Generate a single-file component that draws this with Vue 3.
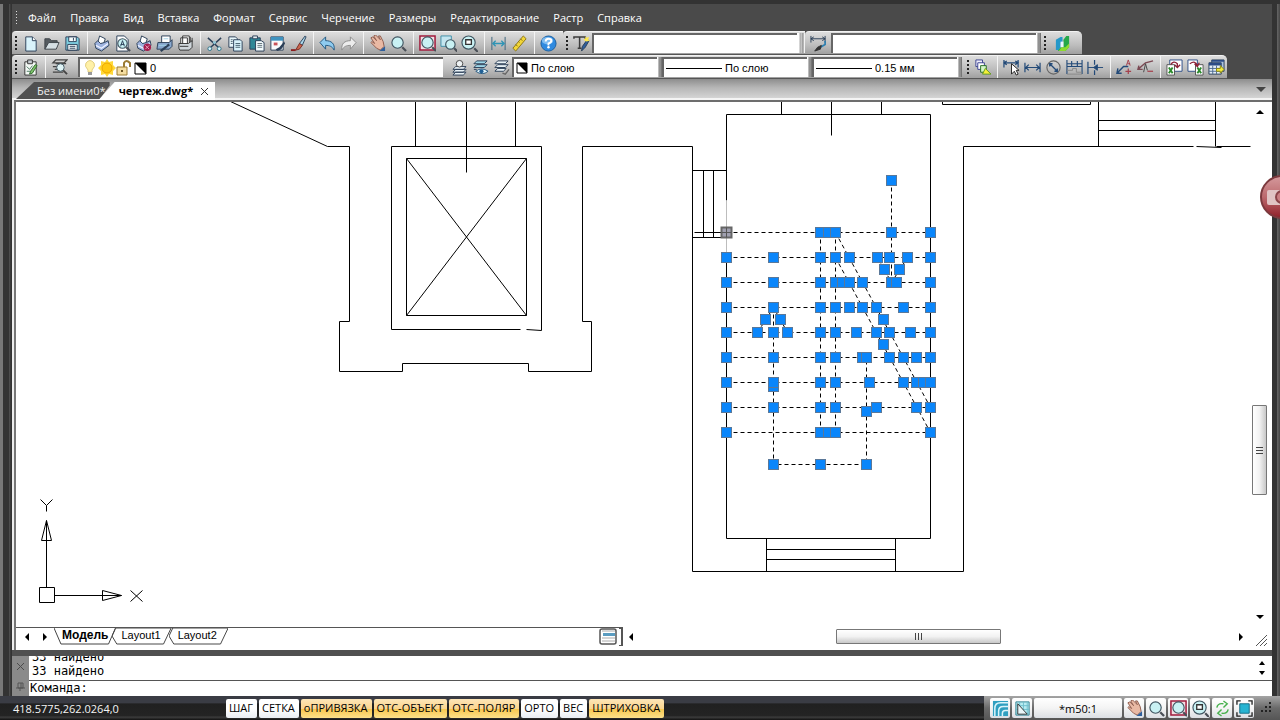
<script setup>
import { ref } from 'vue'

const ink = '#2b3f57'
const lens = (x, y, r) =>
  `<path d="M${x + r - 1} ${y + r - 1}l4 4" stroke="#4a4f57" stroke-width="2.4"/><circle cx="${x}" cy="${y}" r="${r}" fill="#c9f1f3" stroke="#3f5460" stroke-width="1.2"/>`
const hand = `<path d="M2 3l2-1 4 4-3-5 2-1 5 5-2-4 2 0 3 6 1 5-4 4-4-2-6-6 1-1 3 2z" fill="#e9b9a4" stroke="#8d5a4b"/><path d="M11 17l6-5v5z" fill="#2f5f9c"/>`
const printer = `<path d="M5 8L7 1l6 3-2 6z" fill="#fff" stroke="${ink}"/><path d="M2 9l3-3 3 3 4-1 4-2 1 5-8 6-6-3z" fill="#9fb4e0" stroke="${ink}"/><path d="M3 11l6 3 7-5" fill="none" stroke="#eef3ff" stroke-width="1.400"/>`
const layers = `<path d="M5 8h11l-3 3H2zM5 11h11l-3 3H2zM5 14h11l-3 3H2z" fill="#e9f2f6" stroke="${ink}"/>`

const icons = {
  new: `<path d="M4 2h7l4 4v11H4z" fill="#d9f3fb" stroke="${ink}"/><path d="M11 2v4h4" fill="#fff" stroke="${ink}"/>`,
  open: `<path d="M2 15V4h5l2 2h6v3" fill="#555b60" stroke="#3b4248"/><path d="M2 15l4-7h11l-3 7z" fill="#d5dfe4" stroke="#3b4248"/>`,
  save: `<path d="M2 2h12l2 2v12H2z" fill="#7fd0e2" stroke="${ink}"/><path d="M5 2h8v5H5zM4 10h10v6H4z" fill="#f4fbfc" stroke="${ink}"/><path d="M6 12h6M6 14h6M10 3v3" stroke="${ink}"/>`,
  print: printer,
  preview: `<path d="M3 1h8l4 4v12H3z" fill="#fff" stroke="${ink}"/>${lens(9, 9, 5)}<path d="M7 12l2-6 2 6M7 10h4" fill="none" stroke="${ink}"/>`,
  plotset: `${printer}<circle cx="13" cy="13" r="4" fill="#a51c4c"/><path d="M11 11l4 4M15 11l-4 4" stroke="#e8a0bb"/>`,
  publish: `<path d="M6 8V1h9v8" fill="#fff" stroke="${ink}"/><path d="M2 8h12l3-3v7l-3 3H1z" fill="#8aa9cf" stroke="${ink}"/><path d="M5 17l9-7" stroke="${ink}" stroke-width="2.400"/><path d="M3 11h8M8 4h5" stroke="#9fd0e6"/>`,
  batch: `<path d="M6 1h7v9H6zM4 3h7v9H4z" fill="#fff" stroke="#333"/><path d="M2 9h10l4-3v7l-3 3H3l-1-2z" fill="#cfd6db" stroke="#333"/><path d="M3 12h9M14 2v5M16 3v4" stroke="#333"/>`,
  cut: `<path d="M2 3l11 10M16 3L5 13" stroke="${ink}" stroke-width="1.6"/><path d="M7 8l2-2 2 2-2 2z" fill="#8fc7d8"/><circle cx="4" cy="14.500" r="2" fill="#d9f3fb" stroke="#2e7187"/><circle cx="14" cy="14.500" r="2" fill="#d9f3fb" stroke="#2e7187"/>`,
  copy: `<path d="M2 2h7l2 2v9H2z" fill="#e9f7fb" stroke="${ink}"/><path d="M7 5h7l2 2v10H7z" fill="#d9f3fb" stroke="${ink}"/><path d="M9 9h5M9 11h5M9 13h5M4 5h2M4 7h2M4 9h2" stroke="#47616f"/>`,
  paste: `<path d="M2 3h11v12H2z" fill="#2f8797" stroke="${ink}"/><path d="M5 1h5v3H5z" fill="#e5eef0" stroke="${ink}"/><path d="M8 6h6l3 2v9H8z" fill="#f3fbfd" stroke="${ink}"/><path d="M10 9h5M10 11h5M10 13h5" stroke="#5f6f78"/>`,
  match: `<path d="M2 2h13v14H2z" fill="#f8fbfc" stroke="${ink}"/><path d="M2 2h13v4H2z" fill="#3f93c0"/><path d="M5 8h4v3H5z" fill="#c9545a"/><path d="M16 7l-5 6-4 2 2 2 4-2 4-6z" fill="${ink}"/>`,
  brush: `<path d="M16 1l-6 8 3 2 4-9z" fill="#a9d6ea" stroke="${ink}"/><path d="M10 9l3 2-3 4-4 1z" fill="#c9664f" stroke="#7a2c22"/><path d="M1 16h5" stroke="#8b1c1c" stroke-width="2"/>`,
  undo: `<path d="M1 8l6-6v4c6 0 10 3 9 10-2-4-5-5-9-5v4z" fill="#8ecbf0" stroke="#23577f"/>`,
  redo: `<path d="M17 8l-6-6v4c-6 0-10 3-9 10 2-4 5-5 9-5v4z" fill="#ececec" stroke="#8c8c8c"/>`,
  hand,
  zoom: lens(8, 8, 6),
  extents: `<path d="M1 1h16v15H1z" fill="#f3dfe3" stroke="#a01b3d" stroke-width="1.600"/>${lens(9, 8, 6)}`,
  window: `<path d="M1 1h11v11H1z" fill="#c4e6f0" stroke="#3f8ea8"/>${lens(11, 10, 5)}`,
  previous: `${lens(8, 8, 7)}<path d="M5 5h6v5H5z" fill="#fff" stroke="#333" stroke-width="1.400"/>`,
  distance: `<path d="M2 2v14M16 2v14" stroke="#38627a"/><path d="M3 9h12M6 6L3 9l3 3M12 6l3 3-3 3" fill="none" stroke="#2f94b5" stroke-width="1.400"/>`,
  ruler: `<path d="M2 14L13 1l3 3L5 17z" fill="#f2d638" stroke="#8b7515"/><path d="M5 10l2 2M8 7l1 1M10 4l2 2" stroke="#7c6812"/>`,
  help: `<circle cx="9" cy="9" r="8" fill="#2f8ae0" stroke="#1c5f9e"/><ellipse cx="8" cy="6" rx="6" ry="4" fill="#7dbcf2"/><path d="M6 7q0-3 3-3t3 2q0 2-3 3v2" fill="none" stroke="#fff" stroke-width="2"/><circle cx="9" cy="13" r="1.300" fill="#fff"/>`,
  textstyle: `<path d="M1 4V2h12v2M7 2v12M5 14h4" fill="none" stroke="#3c3c3c" stroke-width="1.600"/><path d="M17 6l-4 7-4 4 1-5 5-7z" fill="#2f5f9c" stroke="${ink}"/><path d="M13 1l1 2 3-1-1 3 2 1-4 1-3-2 2-1z" fill="#ffe94a"/>`,
  dimstyle: `<path d="M1 1v7M16 1v7M1 4h15M4 2L1 4l3 2M13 2l3 2-3 2" fill="none" stroke="${ink}"/><path d="M16 6v4l-5 3" fill="none" stroke="#2d7fb0" stroke-width="1.800"/><path d="M12 11l-1 4-6 2 3-4z" fill="#333" stroke="#333"/>`,
  nano: `<path d="M2 16V5l5-3h2v6H7v5l-2 3z" fill="#2498c9"/><path d="M16 1v12l-4 4H4l3-4h3V5l3-4z" fill="#25a84a"/><path d="M7 7h3v6H7z" fill="#e9f7ff"/><path d="M16 9v4l-4 4H5l3-4h4z" fill="#8edb2f"/>`,
  layerprops: `<path d="M3 3h12v14H3z" fill="#f3f8f4" stroke="#333"/><path d="M6 1h5v4H6z" fill="#c5cbd0" stroke="#333"/><path d="M5 8l3 3 3-4M5 13h4" fill="none" stroke="#4c7a63"/><path d="M16 7l-5 8-3 1 1-3 5-7z" fill="#7ec26a" stroke="#2f6a2a"/>`,
  layerfind: `<path d="M5 1h12l-3 3H2zM5 5h11M2 8h5M4 11h3M2 14h11" fill="none" stroke="#444" stroke-width="1.300"/><circle cx="10" cy="9" r="4" fill="#dff3f5" stroke="#3f5460"/><path d="M13 12l4 4" stroke="#444" stroke-width="2"/>`,
  laycur: `${layers}<circle cx="9" cy="5" r="3.500" fill="#eef2f4" stroke="#444"/>`,
  layeye: `<path d="M5 2h11l-3 3H2zM5 6h11l-3 3H2z" fill="#9fd8ea" stroke="${ink}"/><path d="M4 13q6-5 13 0-6 5-13 0z" fill="#e7f7fb" stroke="#23577f"/><circle cx="10" cy="13" r="2.200" fill="#1f5f95"/><path d="M2 11h3" stroke="${ink}"/>`,
  layprev: `<path d="M5 2h11l-3 3H2zM5 6h11l-3 3H2zM5 10h9l-3 3H2z" fill="#e9f2f6" stroke="${ink}"/><path d="M17 11l-4 5-3-1" fill="none" stroke="#666" stroke-width="1.400"/>`,
  draworder: `<path d="M2 1h7v7H2z" fill="#f2effc" stroke="#38418f"/><path d="M4 4h7v7H4z" fill="#fff" stroke="#38418f"/><path d="M7 7h6v7H7z" fill="#d5f5c8" stroke="#246b24"/><path d="M9 16l3-6 6 6z" fill="#f7ef3a" stroke="#5f9a1c"/>`,
  dimcur: `<path d="M1 1v8M16 1v8M1 4h15M4 2L1 4l3 2M13 2l3 2-3 2" fill="none" stroke="#234a78" stroke-width="1.300"/><path d="M9 5v11l3-3 2 4 2-1-2-4h3z" fill="#fff" stroke="#222"/>`,
  dimlin: `<path d="M1 4v10M17 4v10M1 9h16M5 6L2 9l3 3M13 6l3 3-3 3" fill="none" stroke="#234a78" stroke-width="1.300"/>`,
  dimdia: `<circle cx="9" cy="9" r="7" fill="none" stroke="#666" stroke-width="1.200"/><path d="M5 5l8 8M5 8V5h3M13 10v3h-3" fill="none" stroke="#234a78" stroke-width="1.400"/>`,
  dimcont: `<path d="M1 1v15M17 1v15M6 2v6M12 2v6M1 5h16M1 8h16" stroke="#234a78" stroke-width="1.200"/><path d="M1 12h6v-2h4v4h6M1 16h16" fill="none" stroke="#888"/>`,
  dimcenter: `<path d="M1 3v13M8 1v5M8 12v5" stroke="#234a78" stroke-width="1.300"/><path d="M1 9h16M11 6L7 9l4 3z" fill="#234a78" stroke="#234a78"/>`,
  leader: `<path d="M1 15L8 8h5M2 10l-1 5h5" fill="none" stroke="#234a78" stroke-width="1.500"/><path d="M11 7l2-6 2 6M12 5h3" fill="none" stroke="#a4414d"/><path d="M10 13h6M13 10v6" stroke="#a4414d" stroke-width="1.300"/>`,
  leader2: `<path d="M1 11l8-7 8-2M2 7l-1 4h5" fill="none" stroke="#7b4953" stroke-width="1.500"/><path d="M9 5L7 14M9 5l2 7" stroke="#444"/><path d="M11 13h6" stroke="#a4414d" stroke-width="1.300"/>`,
  import: `<path d="M4 1h13v12H4z" fill="#fff" stroke="#2c4c86"/><path d="M1 6h8v11H1z" fill="#fff" stroke="#555"/><path d="M3 9l4 6M7 9l-4 6" stroke="#2b8a2b" stroke-width="2"/><path d="M5 6q3-5 7-1v3M9 6l3 3 3-3" fill="none" stroke="#8e2238" stroke-width="1.400"/>`,
  export: `<path d="M1 1h10v12H1z" fill="#fff" stroke="#2c4c86"/><path d="M9 6h8v11H9z" fill="#fff" stroke="#555"/><path d="M11 9l4 6M15 9l-4 6" stroke="#2b8a2b" stroke-width="2"/><path d="M3 5q6-4 8 2M8 5l3 3 2-4" fill="none" stroke="#8e2238" stroke-width="1.400"/>`,
  table: `<path d="M4 1h13v12H4z" fill="#aac3de" stroke="${ink}"/><path d="M1 4h13v12H1z" fill="#e6f0f8" stroke="${ink}"/><path d="M1 4h13v3H1zM4 1h13v2H4z" fill="#2c4c86"/><path d="M1 10h12M1 13h12M5 7v9M9 7v9" stroke="#4a6890"/><path d="M9 10h4V7l4 4-4 4v-2H9z" fill="#f2ec3c" stroke="#8b8412"/>`,
  iso: `<path d="M1 1h16v16H1z" fill="#2f9fc0"/><path d="M3 17V9q0-6 6-6h8M7 17v-5q0-5 5-5h5M11 17v-3q0-3 3-3h3" fill="none" stroke="#d9f4fa" stroke-width="1.600"/>`,
  snapgrid: `<path d="M2 2h14v14H2z" fill="#b8ecf2" stroke="#2f7f90"/><path d="M6 2v14M10 2v14M14 2v14M2 6h14M2 10h14M2 14h14" stroke="#70bfcc"/><path d="M4 4l10 11H4z" fill="#eaf6f8" stroke="#333"/>`,
  regen: `<path d="M3 8q1-5 7-4M10 1l4 3-4 4M15 10q-1 5-7 4M8 10l-4 4 4 3" fill="none" stroke="#46b04c" stroke-width="1.500"/>`,
  full: `<path d="M4 4h10v10H4z" fill="#27b4d2" stroke="#136d86"/><path d="M1 5V1h4M13 1h4v4M17 13v4h-4M5 17H1v-4" fill="none" stroke="#222" stroke-width="1.400"/>`,
}

const menus = ['Файл', 'Правка', 'Вид', 'Вставка', 'Формат', 'Сервис', 'Черчение', 'Размеры', 'Редактирование', 'Растр', 'Справка']

const standard = [
  [['new', 'Новый'], ['open', 'Открыть'], ['save', 'Сохранить']],
  [['print', 'Печать'], ['preview', 'Просмотр'], ['plotset', 'Параметры печати'], ['publish', 'Публикация'], ['batch', 'Пакетная печать']],
  [['cut', 'Вырезать'], ['copy', 'Копировать'], ['paste', 'Вставить'], ['match', 'Копировать свойства'], ['brush', 'Кисть']],
  [['undo', 'Отменить'], ['redo', 'Вернуть']],
  [['hand', 'Панорамирование'], ['zoom', 'Зумирование']],
  [['extents', 'Показать все'], ['window', 'Рамка'], ['previous', 'Предыдущий']],
  [['distance', 'Расстояние'], ['ruler', 'Линейка']],
  [['help', 'Помощь']],
]
const dimensions = [
  [['draworder', 'Порядок']],
  [['dimcur', 'Размер'], ['dimlin', 'Линейный'], ['dimdia', 'Диаметр'], ['dimcont', 'Цепь'], ['dimcenter', 'Маркер']],
  [['leader', 'Выноска'], ['leader2', 'Удалить выноску']],
  [['import', 'Импорт'], ['export', 'Экспорт'], ['table', 'Таблица']],
]
const layerTools = [['laycur', 'Текущий слой'], ['layeye', 'Видимость'], ['layprev', 'Предыдущий слой']]

const modes = ref([
  { label: 'ШАГ', on: false },
  { label: 'СЕТКА', on: false },
  { label: 'оПРИВЯЗКА', on: true },
  { label: 'ОТС-ОБЪЕКТ', on: true },
  { label: 'ОТС-ПОЛЯР', on: true },
  { label: 'ОРТО', on: false },
  { label: 'ВЕС', on: false },
  { label: 'ШТРИХОВКА', on: true },
])
const views = [['hand', 'Панорамирование'], ['zoom', 'Зумирование'], ['extents', 'Показать все'], ['previous', 'Предыдущий вид'], ['regen', 'Обновить'], ['full', 'Весь экран']]

const command = ref('')

const rows = [232, 257, 282, 307, 332, 357, 382, 407, 432]
const gripRows = [
  [180, [891]],
  [232, [820, 828, 835, 891, 930]],
  [257, [726, 773, 820, 835, 849, 877, 889, 907, 930]],
  [269, [884, 899]],
  [282, [726, 773, 820, 835, 842, 849, 862, 891, 896, 930]],
  [307, [726, 773, 820, 835, 849, 862, 876, 903, 930]],
  [319, [765, 780, 883]],
  [332, [726, 757, 773, 787, 820, 835, 856, 876, 889, 910, 930]],
  [344, [883]],
  [357, [726, 773, 820, 835, 862, 866, 889, 903, 916, 930]],
  [386, [773]],
  [382, [726, 773, 820, 835, 869, 903, 916, 923, 930]],
  [407, [726, 773, 820, 835, 876, 916, 930]],
  [411, [866]],
  [432, [726, 820, 828, 835, 930]],
  [464, [773, 820, 866]],
]
const grips = gripRows.flatMap(([y, xs]) => xs.map((x) => ({ x, y })))
</script>

<template>
  <div class="window">
    <nav class="menu">
      <i class="grip light"></i>
      <button v-for="m in menus" :key="m" type="button">{{ m }}</button>
    </nav>

    <div class="tools">
      <div class="bar">
        <i class="grip"></i>
        <div v-for="(g, n) in standard" :key="n" class="group">
          <button v-for="[id, name] in g" :key="id" class="tool" type="button" :aria-label="name">
            <svg viewBox="0 0 18 18" v-html="icons[id]"></svg>
          </button>
        </div>
      </div>
      <div class="bar">
        <i class="grip"></i>
        <button class="tool" type="button" aria-label="Текстовый стиль"><svg viewBox="0 0 18 18" v-html="icons.textstyle"></svg></button>
        <select class="combo style" aria-label="Стиль текста"><option></option></select>
        <i class="end"></i>
      </div>
      <div class="bar">
        <button class="tool wide" type="button" aria-label="Размерный стиль"><svg viewBox="0 0 18 18" v-html="icons.dimstyle"></svg></button>
        <select class="combo style" aria-label="Стиль размеров"><option></option></select>
        <i class="end slim"></i>
      </div>
      <div class="bar last brand">
        <i class="grip"></i>
        <button class="tool wide" type="button" aria-label="nanoCAD"><svg viewBox="0 0 18 18" v-html="icons.nano"></svg></button>
      </div>
    </div>

    <div class="tools second">
      <div class="bar">
        <i class="grip"></i>
        <div class="group"><button class="tool" type="button" aria-label="Свойства слоев"><svg viewBox="0 0 18 18" v-html="icons.layerprops"></svg></button></div>
        <div class="group"><button class="tool" type="button" aria-label="Поиск слоя"><svg viewBox="0 0 18 18" v-html="icons.layerfind"></svg></button></div>
        <i class="pad wide"></i>
        <label class="combo layer">
          <svg class="marks" width="64" height="18" viewBox="0 0 64 18">
            <path d="M5 11Q1 7 3 4q4-5 8 0 2 3-2 7v2H5z" fill="#fff1a8" stroke="#e3cf83" />
            <path d="M5 13h4v3H5z" fill="#9a9a9a" />
            <path d="M24 0l2 3 4-1v4l3 3-3 3v4l-4-1-2 3-2-3-4 1v-4l-3-3 3-3V2l4 1z" fill="#ffd83a" />
            <circle cx="24" cy="9" r="5" fill="#ffc913" stroke="#eda800" />
            <path d="M34 8h10v8H34z" fill="#f5dda0" stroke="#9c7b33" />
            <path d="M41 8V4q2-4 6 0v4" fill="none" stroke="#9c7b33" stroke-width="2" />
            <path d="M39 11v2" stroke="#6c5423" stroke-width="2" />
            <path d="M52 4h11v11H52z" fill="#fff" stroke="#000" />
            <path d="M52 4h11v11z" fill="#000" />
          </svg>
          <select aria-label="Слой"><option>0</option></select>
        </label>
        <i class="pad"></i>
        <button v-for="[id, name] in layerTools" :key="id" class="tool" type="button" :aria-label="name">
          <svg viewBox="0 0 18 18" v-html="icons[id]"></svg>
        </button>
        <label class="combo prop">
          <svg class="marks" width="12" height="18" viewBox="0 0 12 18">
            <path d="M1 4h10v10H1z" fill="#fff" stroke="#000" />
            <path d="M1 4h10v10z" fill="#000" />
          </svg>
          <select aria-label="Цвет"><option>По слою</option></select>
        </label>
        <i class="end slim"></i>
        <label class="combo prop"><i class="stroke"></i><select aria-label="Тип линии"><option>По слою</option></select></label>
        <i class="end slim"></i>
        <label class="combo prop"><i class="stroke"></i><select aria-label="Толщина"><option>0.15 мм</option></select></label>
        <i class="end slim"></i>
      </div>
      <div class="bar last">
        <i class="grip"></i>
        <div v-for="(g, n) in dimensions" :key="n" class="group">
          <button v-for="[id, name] in g" :key="id" class="tool" type="button" :aria-label="name">
            <svg viewBox="0 0 18 18" v-html="icons[id]"></svg>
          </button>
        </div>
      </div>
    </div>

    <div class="docs">
      <button class="doc idle" type="button">Без имени0*</button>
      <div class="doc active">
        <button type="button">чертеж.dwg*</button>
        <button type="button" aria-label="Закрыть">
          <svg width="9" height="9" viewBox="0 0 9 9"><path d="M1 1l7 7M8 1l-7 7" stroke="#333" /></svg>
        </button>
      </div>
      <button class="more" type="button" aria-label="Список документов">
        <svg width="10" height="6" viewBox="0 0 10 6"><path d="M0 0h10L5 5z" fill="#444" /></svg>
      </button>
    </div>

    <main class="work">
      <svg class="canvas" aria-label="Чертеж">
        <g transform="translate(-15.5 -101.5)" fill="none" stroke="#000">
          <path d="M230 101L327 146H349V321H339V371H402V363H528V371H591V321H582V146H692V571H963V146H1193M1196 146L1221 147M1216 146H1250" />
          <path d="M526 329L541 330V146H391V329H520M406 158H526V315H406zL526 315M526 158L406 315M415 100V146M515 100V146M466 100V172" />
          <path d="M726 200V114H930V538H726V257M781 100V114M881 100V114M831 100V135M942 100V104H1090V100M1098 100V146M1215 100V146M1098 120H1215M1098 130H1215" />
          <path d="M692 170H726M703 170V237M713 170V237M692 237H726M694 232H726M766 538V571M895 538V571M766 549H895M766 559H895" />
          <path d="M726 200V257" stroke="#bdbdbd" />
          <g stroke-dasharray="4 3">
            <path v-for="y in rows" :key="y" :d="`M726 ${y}H930`" />
            <path d="M820 232V432M835 232V432M891 180V282M773 307V464H866V357" />
            <path d="M835 232L930 407M835 257L930 432M757 332L773 307L787 332M877 257L891 282L907 257" />
          </g>
          <rect v-for="(g, n) in grips" :key="n" :x="g.x - 5" :y="g.y - 5" width="10" height="10" fill="#0a86fb" stroke="#5a7899" />
          <path d="M721 227h10v10h-10z" fill="#a0a0b0" stroke="#666" stroke-width="2" />
          <path d="M726 227v10M721 232h10" stroke="#555" />
          <path d="M39 587H54V602H39zM46 587V520L41 540H51L46 520M54 595H121L102 590V600L121 595M40 499L46 505V511M52 499L46 505M130 590L142 601M142 590L130 601" />
        </g>
      </svg>
      <div class="sheets">
        <button class="step" type="button" aria-label="Назад"><svg width="4" height="8" viewBox="0 0 4 8"><path d="M4 0v8L0 4z" /></svg></button>
        <button class="step" type="button" aria-label="Вперед"><svg width="4" height="8" viewBox="0 0 4 8"><path d="M0 0v8l4-4z" /></svg></button>
        <button class="sheet current" type="button">
          <svg viewBox="0 0 62 17" preserveAspectRatio="none"><path d="M0 0l7 16h48l7-16" /></svg>Модель
        </button>
        <button class="sheet" type="button">
          <svg viewBox="0 0 62 17" preserveAspectRatio="none"><path d="M4 0L0 8l5 8h49l8-16z" /></svg>Layout1
        </button>
        <button class="sheet" type="button">
          <svg viewBox="0 0 62 17" preserveAspectRatio="none"><path d="M4 0L0 8l5 8h49l8-16z" /></svg>Layout2
        </button>
        <button class="list" type="button" aria-label="Листы">
          <svg width="18" height="17" viewBox="0 0 18 17"><rect x="1" y="1" width="16" height="15" rx="2" fill="#fff" stroke="#555" stroke-width="1.500" /><path d="M4 5h12v3H4z" fill="#5a9cc0" /><path d="M3 3h13M3 10h13M3 13h13" stroke="#aaa" /></svg>
        </button>
        <i class="split"></i>
      </div>
      <div class="vscroll">
        <svg width="8" height="4" viewBox="0 0 8 4"><path d="M0 4h8L4 0z" /></svg>
        <i class="above"></i>
        <i class="thumb"></i>
        <i class="below"></i>
        <svg width="8" height="4" viewBox="0 0 8 4"><path d="M0 0h8L4 4z" /></svg>
      </div>
      <div class="hscroll">
        <svg width="4" height="8" viewBox="0 0 4 8"><path d="M4 0v8L0 4z" /></svg>
        <i class="before"></i>
        <i class="thumb"></i>
        <i class="after"></i>
        <svg width="4" height="8" viewBox="0 0 4 8"><path d="M0 0v8l4-4z" /></svg>
      </div>
      <svg class="sizer" width="12" height="12" viewBox="0 0 12 12"><path d="M0 11L11 0M4 11l7-7M8 11l3-3" stroke="#555" /></svg>
    </main>

    <section class="console">
      <div class="side">
        <svg width="9" height="9" viewBox="0 0 9 9"><path d="M1 1l7 7M8 1l-7 7" stroke="#4c4c4c" /></svg>
        <svg width="9" height="9" viewBox="0 0 9 9"><path d="M2 1h5v5H2zM0 6h9M5 1v5M4 6v3" fill="none" stroke="#555" /></svg>
      </div>
      <div class="lines">
        <div class="history">
          <div class="log"><p>33 найдено</p><p>33 найдено</p></div>
          <div class="arrows">
            <svg width="6" height="4" viewBox="0 0 6 4"><path d="M0 4h6L3 0z" /></svg>
            <svg width="6" height="4" viewBox="0 0 6 4"><path d="M0 0h6L3 4z" /></svg>
          </div>
        </div>
        <label class="prompt">Команда:<input v-model="command" type="text" /></label>
      </div>
    </section>

    <footer class="status">
      <output class="coords">418.5775,262.0264,0</output>
      <div class="modes">
        <button v-for="m in modes" :key="m.label" type="button" :class="{ on: m.on }" :aria-pressed="m.on" @click="m.on = !m.on">{{ m.label }}</button>
      </div>
      <div class="right">
        <button type="button" aria-label="Веса линий"><svg viewBox="0 0 18 18" v-html="icons.iso"></svg></button>
        <button type="button" aria-label="Сетка"><svg viewBox="0 0 18 18" v-html="icons.snapgrid"></svg></button>
        <button class="scale" type="button">*m50:1</button>
        <button v-for="[id, name] in views" :key="id" type="button" :aria-label="name"><svg viewBox="0 0 18 18" v-html="icons[id]"></svg></button>
        <svg class="dots" width="12" height="12" viewBox="0 0 12 12"><path d="M9 0h2v2H9zM5 4h2v2H5zM9 4h2v2H9zM1 8h2v2H1zM5 8h2v2H5zM9 8h2v2H9z" fill="#222" /></svg>
      </div>
    </footer>

    <svg class="record" width="20" height="44" viewBox="0 0 20 44">
      <defs>
        <linearGradient id="rec" x1="0" y1="0" x2="0" y2="1">
          <stop offset="0" stop-color="#d59a9d" />
          <stop offset="0.500" stop-color="#bc6a6e" />
          <stop offset="1" stop-color="#8f1f28" />
        </linearGradient>
      </defs>
      <circle cx="22" cy="22" r="21" fill="url(#rec)" stroke="#7b3a3e" stroke-width="2" />
      <rect x="7" y="15" width="16" height="15" rx="2" fill="#e0c4c4" />
      <circle cx="22" cy="22" r="6" fill="#c97f83" stroke="#8a4449" stroke-width="2" />
    </svg>
  </div>
</template>

<style>
html,
body {
  margin: 0;
}
</style>

<style scoped>
.window {
  position: relative;
  box-sizing: border-box;
  display: flex;
  flex-direction: column;
  height: 100vh;
  padding: 4px 8px 0 12px;
  overflow: hidden;
  background: linear-gradient(90deg, #777 3px, #333 3px, #333 9px, #555 9px, #333 11px, #333 calc(100% - 3px), #666 calc(100% - 3px), #444 100%);
  box-shadow: inset 0 4px #333;
  font: 11px "Open Sans", "Noto Sans", sans-serif;
  color: #000;
}
button,
select,
input {
  margin: 0;
  padding: 0;
  border: 0;
  background: none;
  color: inherit;
  font: inherit;
  appearance: none;
}
button {
  cursor: pointer;
}
svg {
  display: block;
  flex: none;
}
i {
  display: block;
  flex: none;
}

.menu {
  flex: none;
  display: flex;
  align-items: center;
  height: 27px;
  gap: 14px;
  background: #4a4a4a;
  color: #fff;
}
.menu button {
  white-space: nowrap;
}
.menu .grip {
  margin-right: -6px;
}
.grip {
  width: 8px;
  height: 15px;
  background: repeating-linear-gradient(#222 0 2px, transparent 2px 4px) 3px 0 / 2px 100% no-repeat;
}
.grip.light {
  height: 13px;
  background: repeating-linear-gradient(#ddd 0 1px, transparent 1px 3px) 4px 0 / 1px 100% no-repeat;
}

.tools {
  flex: none;
  display: flex;
  height: 24px;
  background: #4a4a4a;
}
.bar {
  box-sizing: border-box;
  display: flex;
  align-items: center;
  height: 24px;
  border-top: 1px solid #f2f2f2;
  border-bottom: 1px solid #555;
  border-radius: 4px 0 0 0;
  background: linear-gradient(#dedede, #bdbdbd 60%, #a0a0a0);
}
.bar.last {
  border-radius: 0 5px 0 0;
}
.brand {
  padding-right: 7px;
}
.tools .bar:first-child {
  padding-right: 4px;
}
.second .bar:first-child {
  padding-right: 0;
}
.second .last {
  padding-left: 2px;
}
.group {
  display: flex;
  align-items: center;
}
.group + .group::before {
  content: "";
  width: 1px;
  height: 22px;
  margin: 0 3px 0 4px;
  background: #f4f4f4;
}
.tool {
  display: grid;
  place-items: center;
  width: 21px;
  height: 22px;
}
.tool.wide {
  width: 26px;
}
.tool svg {
  width: 17px;
  height: 17px;
}
.pad {
  width: 6px;
}
.pad.wide {
  width: 8px;
}
.end {
  width: 8px;
  height: 20px;
  background: linear-gradient(90deg, #fff 2px, #aaa 3px, #ccc 5px, #777 6px, #f2f2f2 7px);
}
.end.slim {
  width: 5px;
  background: linear-gradient(90deg, #fff 1px, #777 2px, #aaa 3px, #777 4px);
}
.combo {
  box-sizing: border-box;
  display: flex;
  align-items: center;
  height: 20px;
  border-top: 2px solid #666;
  border-left: 2px solid #666;
  background: #fff;
  font: 11px "Liberation Sans", Arial, sans-serif;
}
.combo select {
  flex: 1;
  min-width: 0;
}
.combo.style {
  width: 205px;
}
.combo.layer {
  width: 365px;
  gap: 3px;
  padding-left: 3px;
}
.combo.prop {
  width: 145px;
  gap: 3px;
  padding-left: 2px;
}
.stroke {
  width: 56px;
  height: 1px;
  background: #000;
}

.docs {
  flex: none;
  display: flex;
  align-items: flex-end;
  height: 21px;
  padding-left: 4px;
  background: linear-gradient(#8d8d8d, #b5b5b5 40%, #dadada);
  box-shadow: inset 0 -2px #f4f4f4;
}
.doc {
  box-sizing: border-box;
  height: 18px;
  white-space: nowrap;
  line-height: 16px;
}
.idle {
  height: 17px;
  margin-bottom: 1px;
  padding: 0 4px 0 21px;
  background: #505050;
  clip-path: polygon(0 100%, 18px 0, 100% 0, 100% 20%, 84px 100%);
  color: #f0f0f0;
}
.active {
  display: flex;
  align-items: center;
  gap: 7px;
  margin-left: -11px;
  padding: 0 6px 0 20px;
  background: #fff;
  clip-path: polygon(0 100%, 16px 0, 100% 0, 100% 100%);
  font-weight: 700;
}
.more {
  align-self: center;
  margin: 0 6px 0 auto;
}

.work {
  flex: 1;
  min-height: 0;
  display: grid;
  grid-template-columns: minmax(0, 1fr) 20px;
  grid-template-rows: minmax(0, 1fr) 23px;
  margin-left: 2px;
  border-top: 2px solid #6d6d6d;
  border-left: 2px solid #777;
  background: #fff;
  box-shadow: -2px 0 #eee;
}
.canvas {
  grid-area: 1 / 1;
  width: 100%;
  height: 100%;
  overflow: hidden;
}
.vscroll {
  grid-area: 1 / 2;
  display: flex;
  flex-direction: column;
  align-items: center;
  padding: 8px 5px 8px 0;
}
.above {
  flex: 291;
}
.below {
  flex: 120;
}
.thumb {
  box-sizing: border-box;
  border: 1px solid #777;
  border-radius: 1px;
}
.vscroll .thumb {
  width: 15px;
  height: 90px;
  background:
    repeating-linear-gradient(#444 0 1px, transparent 1px 3px) center / 7px 7px no-repeat,
    linear-gradient(90deg, #fff, #f2f2f2 50%, #c8c8c8);
}
.sheets {
  grid-area: 2 / 1;
  display: flex;
  align-items: flex-start;
  box-sizing: border-box;
  width: 607px;
  padding-left: 2px;
  border-top: 1px solid #555;
  font: 11px "Liberation Sans", Arial, sans-serif;
}
.step {
  display: grid;
  place-items: center;
  width: 18px;
  height: 17px;
}
.sheet {
  position: relative;
  height: 17px;
  margin-left: -3px;
  padding: 0 11px 2px 9px;
  line-height: 15px;
}
.sheet svg {
  position: absolute;
  inset: 0;
  width: 100%;
  height: 100%;
  fill: none;
  stroke: #444;
}
.current {
  margin-left: 0;
  padding: 0 7px 2px 8px;
  font-size: 12px;
  font-weight: bold;
}
.list {
  margin-left: auto;
}
.split {
  width: 2px;
  height: 16px;
  margin: 0 0 0 2px;
  border: solid #555;
  border-width: 1px 2px 1px 0;
}
.hscroll {
  grid-area: 2 / 1;
  display: flex;
  align-items: center;
  margin-left: 607px;
  padding: 0 9px 4px 6px;
}
.before {
  flex: 202;
}
.after {
  flex: 237;
}
.hscroll .thumb {
  width: 165px;
  height: 15px;
  background:
    repeating-linear-gradient(90deg, #444 0 1px, transparent 1px 3px) center / 7px 7px no-repeat,
    linear-gradient(#fff, #f2f2f2 50%, #c8c8c8);
}
.sizer {
  grid-area: 2 / 2;
  align-self: end;
  margin: 0 0 3px 4px;
}

.console {
  flex: none;
  display: flex;
  height: 40px;
  border-top: 6px solid #505050;
  background: #fff;
}
.side {
  display: flex;
  flex-direction: column;
  align-items: center;
  justify-content: space-around;
  width: 17px;
  background: #8a8a8a;
}
.lines {
  flex: 1;
  display: flex;
  flex-direction: column;
  min-width: 0;
  font: 12px "DejaVu Sans Mono", monospace;
}
.history {
  display: flex;
  justify-content: space-between;
  height: 24px;
  border-bottom: 1px solid #555;
}
.log {
  display: flex;
  flex-direction: column;
  justify-content: flex-end;
  padding: 0 0 2px 3px;
  overflow: hidden;
}
.log p {
  flex: none;
  margin: 0;
  line-height: 14px;
}
.arrows {
  display: flex;
  flex-direction: column;
  justify-content: space-evenly;
  padding-right: 7px;
}
.prompt {
  display: flex;
  padding-left: 1px;
  line-height: 14px;
}
.prompt input {
  flex: 1;
  outline: 0;
}

.status {
  flex: none;
  display: flex;
  align-items: center;
  height: 24px;
  margin: 0 -8px 0 -12px;
  background: linear-gradient(#3a3c44 30%, #202020 32%, #242424 85%, #444 86%, #111);
  color: #f4f4f4;
}
.coords {
  width: 213px;
  padding-left: 13px;
}
.modes {
  display: flex;
  gap: 2px;
  color: #000;
}
.modes button {
  height: 19px;
  padding: 0 4px 1px 3px;
  border-radius: 2px;
  background: linear-gradient(#fff, #fff 50%, #e9edf2);
  white-space: nowrap;
}
.modes .on {
  background: linear-gradient(#fde6b8, #fbd58e 50%, #f8c851 55%, #fce08a);
}
.right {
  display: flex;
  align-items: center;
  gap: 2px;
  height: 24px;
  margin-left: auto;
  padding: 0 8px 0 6px;
  background: linear-gradient(#a5a5a5, #6a6a6a 50%, #555);
  color: #000;
}
.right button {
  display: grid;
  place-items: center;
  width: 20px;
  height: 20px;
  border-radius: 2px;
  background: linear-gradient(#fff, #f4f4f4 50%, #dcdfe4);
}
.right button svg {
  width: 17px;
  height: 17px;
}
.right .scale {
  width: 88px;
}
.dots {
  margin-left: 4px;
}
.record {
  position: absolute;
  top: 175px;
  right: 0;
}
</style>
